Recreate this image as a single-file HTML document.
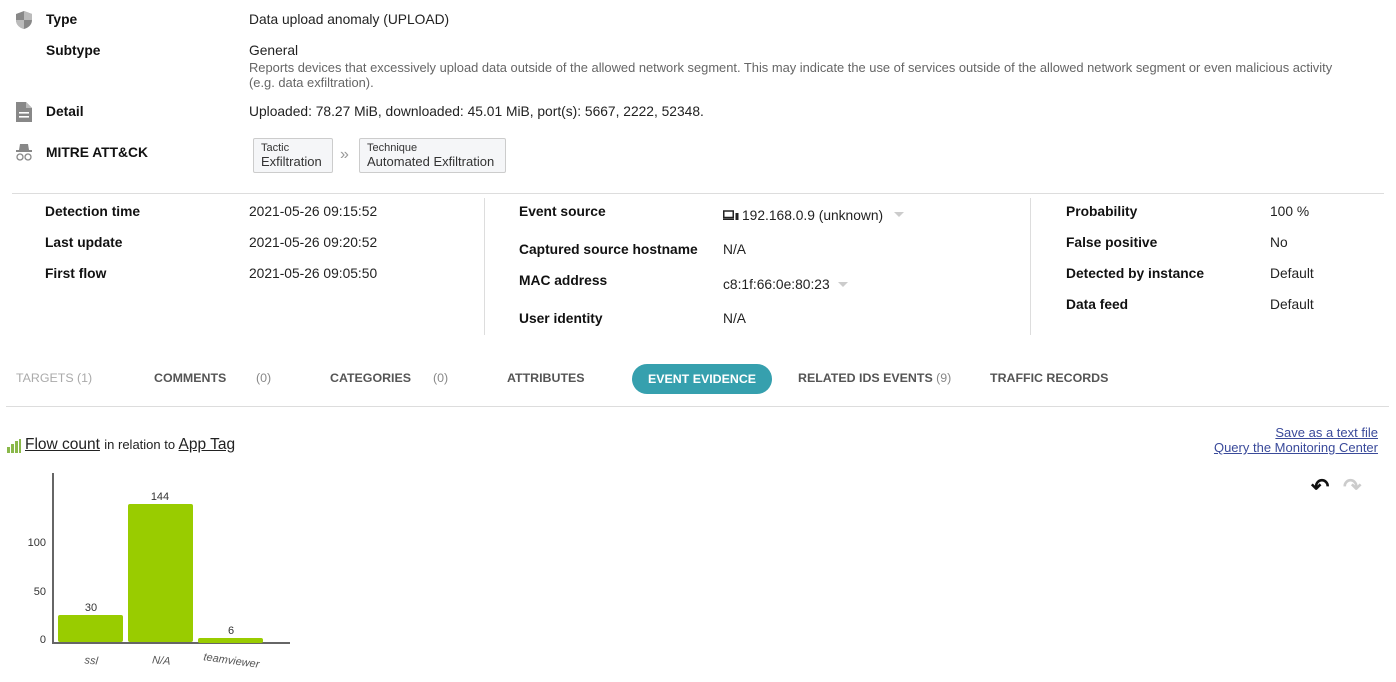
<!DOCTYPE html>
<html><head><meta charset="utf-8"><style>
body{margin:0;width:1396px;height:682px;background:#fff;font-family:"Liberation Sans",sans-serif;font-size:13.8px;color:#222;position:relative;overflow:hidden}
.a{position:absolute;white-space:nowrap}
.b{font-weight:bold;color:#111}
.s{font-size:12.9px;color:#666}
.tab{position:absolute;top:371px;font-size:12.4px;font-weight:bold;color:#555}
.box{position:absolute;top:138px;height:35px;border:1px solid #ccc;background:#f5f6f8;border-radius:2px;box-sizing:border-box;padding:3px 7px}
.box .t{font-size:11px;color:#333}
.box .v{font-size:13px;color:#333}
a{color:#3a4a9a}
</style></head><body>
<svg class="a" style="left:14px;top:10px" width="20" height="20" viewBox="0 0 20 20"><path d="M10 1 L18 4 V10 C18 15 14 18 10 19 C6 18 2 15 2 10 V4Z" fill="#888"/><path d="M10 1 V10 H18 V4Z M10 10 V19 C6 18 2 15 2 10Z" fill="#bbb"/></svg>
<div class="a b" style="left:46px;top:12px">Type</div>
<div class="a" style="left:249px;top:12px">Data upload anomaly (UPLOAD)</div>
<div class="a b" style="left:46px;top:43px">Subtype</div>
<div class="a" style="left:249px;top:43px">General</div>
<div class="a s" style="left:249px;top:60px;line-height:15px">Reports devices that excessively upload data outside of the allowed network segment. This may indicate the use of services outside of the allowed network segment or even malicious activity<br>(e.g. data exfiltration).</div>
<svg class="a" style="left:16px;top:102px" width="16" height="20" viewBox="0 0 16 20"><path d="M0 0H10L16 6V20H0Z" fill="#888"/><path d="M10 0V6H16" fill="#bbb"/><rect x="3" y="10" width="10" height="1.6" fill="#fff"/><rect x="3" y="14" width="10" height="1.6" fill="#fff"/></svg>
<div class="a b" style="left:46px;top:104px">Detail</div>
<div class="a" style="left:249px;top:104px">Uploaded: 78.27 MiB, downloaded: 45.01 MiB, port(s): 5667, 2222, 52348.</div>
<svg class="a" style="left:14px;top:142px" width="20" height="20" viewBox="0 0 20 20"><path d="M6 2H14L15 8H5Z" fill="#888"/><rect x="2" y="8" width="16" height="2" fill="#888"/><circle cx="6" cy="15" r="3" fill="none" stroke="#888" stroke-width="1.3"/><circle cx="14" cy="15" r="3" fill="none" stroke="#888" stroke-width="1.3"/></svg>
<div class="a b" style="left:46px;top:145px">MITRE ATT&amp;CK</div>
<div class="box" style="left:253px;width:80px"><div class="t">Tactic</div><div class="v">Exfiltration</div></div>
<div class="a" style="left:340px;top:146px;color:#999;font-size:16px">»</div>
<div class="box" style="left:359px;width:147px"><div class="t">Technique</div><div class="v">Automated Exfiltration</div></div>
<div class="a" style="left:12px;top:193px;width:1372px;height:1px;background:#ddd"></div>
<div class="a b" style="left:45px;top:204px">Detection time</div><div class="a" style="left:249px;top:204px">2021-05-26 09:15:52</div>
<div class="a b" style="left:45px;top:235px">Last update</div><div class="a" style="left:249px;top:235px">2021-05-26 09:20:52</div>
<div class="a b" style="left:45px;top:266px">First flow</div><div class="a" style="left:249px;top:266px">2021-05-26 09:05:50</div>
<div class="a" style="left:484px;top:198px;width:1px;height:137px;background:#ddd"></div>
<div class="a b" style="left:519px;top:204px">Event source</div>
<svg class="a" style="left:723px;top:210px" width="16" height="12" viewBox="0 0 16 12"><rect x="0.75" y="1" width="9.5" height="6.5" fill="none" stroke="#222" stroke-width="1.5"/><rect x="0" y="8.5" width="11" height="1.5" fill="#222"/><rect x="12.5" y="3" width="3" height="7" fill="#222"/></svg>
<div class="a" style="left:742px;top:208px">192.168.0.9 (unknown)</div>
<div class="a" style="left:894px;top:212px;border:5px solid transparent;border-top-color:#ccc"></div>
<div class="a b" style="left:519px;top:242px">Captured source hostname</div><div class="a" style="left:723px;top:242px">N/A</div>
<div class="a b" style="left:519px;top:273px">MAC address</div><div class="a" style="left:723px;top:277px">c8:1f:66:0e:80:23</div>
<div class="a" style="left:838px;top:282px;border:5px solid transparent;border-top-color:#ccc"></div>
<div class="a b" style="left:519px;top:311px">User identity</div><div class="a" style="left:723px;top:311px">N/A</div>
<div class="a" style="left:1030px;top:198px;width:1px;height:137px;background:#ddd"></div>
<div class="a b" style="left:1066px;top:204px">Probability</div><div class="a" style="left:1270px;top:204px">100 %</div>
<div class="a b" style="left:1066px;top:235px">False positive</div><div class="a" style="left:1270px;top:235px">No</div>
<div class="a b" style="left:1066px;top:266px">Detected by instance</div><div class="a" style="left:1270px;top:266px">Default</div>
<div class="a b" style="left:1066px;top:297px">Data feed</div><div class="a" style="left:1270px;top:297px">Default</div>
<div class="tab" style="left:16px;color:#aaa;font-weight:normal">TARGETS (1)</div>
<div class="tab" style="left:154px">COMMENTS</div><div class="tab" style="left:256px;font-weight:normal;color:#888">(0)</div>
<div class="tab" style="left:330px">CATEGORIES</div><div class="tab" style="left:433px;font-weight:normal;color:#888">(0)</div>
<div class="tab" style="left:507px">ATTRIBUTES</div>
<div class="a" style="left:632px;top:364px;width:140px;height:30px;border-radius:15px;background:#36a0ae;color:#fff;font-size:12.4px;font-weight:bold;text-align:center;line-height:30px">EVENT EVIDENCE</div>
<div class="tab" style="left:798px">RELATED IDS EVENTS <span style="font-weight:normal;color:#888">(9)</span></div>
<div class="tab" style="left:990px">TRAFFIC RECORDS</div>
<div class="a" style="left:6px;top:406px;width:1383px;height:1px;background:#ddd"></div>
<svg class="a" style="left:7px;top:439px" width="14" height="14" viewBox="0 0 14 14"><rect x="0" y="8" width="3" height="6" fill="#8ab84a"/><rect x="4" y="5" width="3" height="9" fill="#8ab84a"/><rect x="8" y="2" width="3" height="12" fill="#8ab84a"/><rect x="12" y="0" width="2" height="14" fill="#8ab84a"/></svg>
<div class="a" style="left:25px;top:436px;font-size:15.5px"><u>Flow count</u> <span style="font-size:13px">in relation to</span> <u>App Tag</u></div>
<div class="a" style="right:18px;top:425px;text-align:right;font-size:13px;line-height:15px"><a href="#">Save as a text file</a><br><a href="#">Query the Monitoring Center</a></div>
<div class="a" style="left:1311px;top:474px;font-size:22px;font-weight:bold;color:#111">↶</div>
<div class="a" style="left:1343px;top:474px;font-size:22px;font-weight:bold;color:#ccc">↷</div>
<svg class="a" style="left:0;top:465px" width="300" height="217">
<line x1="53" y1="8" x2="53" y2="179" stroke="#666" stroke-width="2"/>
<line x1="52" y1="178" x2="290" y2="178" stroke="#666" stroke-width="2"/>
<g font-family="Liberation Sans" font-size="11" fill="#333">
<text x="46" y="81" text-anchor="end">100</text><text x="46" y="130" text-anchor="end">50</text><text x="46" y="178" text-anchor="end">0</text>
<rect x="58" y="150" width="65" height="27" rx="2" fill="#9c0"/><text x="91" y="146" text-anchor="middle">30</text>
<rect x="128" y="39" width="65" height="138" rx="2" fill="#9c0"/><text x="160" y="35" text-anchor="middle">144</text>
<rect x="198" y="173" width="65" height="5" rx="2" fill="#9c0"/><text x="231" y="169" text-anchor="middle">6</text>
<text x="91" y="199" text-anchor="middle" font-style="italic" fill="#555" transform="rotate(5 91 199)">ssl</text>
<text x="161" y="199" text-anchor="middle" font-style="italic" fill="#555" transform="rotate(5 161 199)">N/A</text>
<text x="231" y="199" text-anchor="middle" font-style="italic" fill="#555" transform="rotate(8 231 199)">teamviewer</text>
</g></svg>
</body></html>
